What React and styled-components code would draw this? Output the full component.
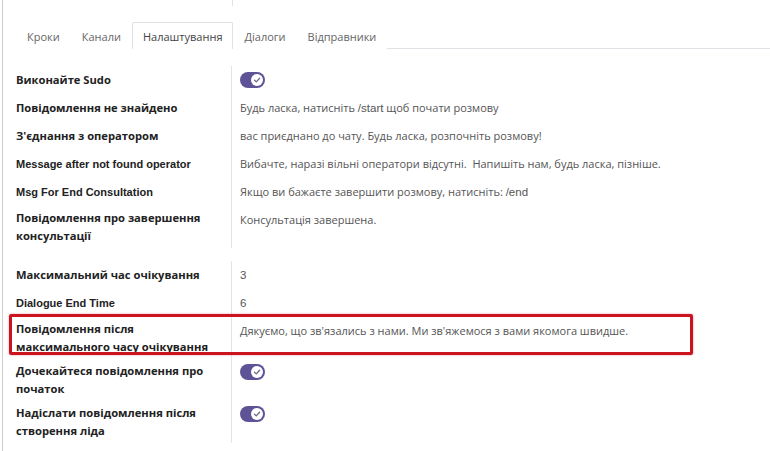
import React from 'react';
import styled, { createGlobalStyle } from 'styled-components';

const Global = createGlobalStyle`
    html, body {
        margin: 0;
        padding: 0;
        background: #fff;
    }
    body {
        font-family: "Open Sans", "Liberation Sans", sans-serif;
    }
`;

const Sheet = styled.div`
    border-left: 1px solid #cfcfcf;
    height: 451px;
    margin-left: 2px;
    overflow: hidden;
    box-sizing: border-box;
`;

const TopStub = styled.div`
    border-right: 1px solid #e2e2e2;
    height: 6px;
    width: 229px;
`;

const TabBar = styled.ul`
    border-bottom: 1px solid #dee2e6;
    display: flex;
    list-style: none;
    margin: 16px 0 0 13px;
    padding: 0;
`;

const Tab = styled.li`
    background: #fff;
    border: 1px solid ${p => (p.active ? '#dee2e6' : 'transparent')};
    border-bottom: none;
    color: ${p => (p.active ? '#444' : '#666')};
    font-size: 11px;
    height: 27px;
    line-height: 27px;
    margin-bottom: -1px;
    padding: 0 10px;
    box-sizing: border-box;
    border-radius: 2px 2px 0 0;
`;

const Group = styled.div`
    margin: ${p => p.top}px 0 0 13px;
    width: 740px;
`;

const Row = styled.div`
    display: grid;
    grid-template-columns: 216px 1fr;
    min-height: 28px;
    position: relative;
`;

const Label = styled.div`
    align-items: center;
    border-right: 1px solid #e4e4e4;
    box-sizing: border-box;
    color: #222;
    display: flex;
    font-family: ${p => (p.latin ? '"Liberation Sans", Arial, sans-serif' : '"Open Sans", sans-serif')};
    font-size: ${p => (p.latin ? '11px' : '11.2px')};
    font-weight: 700;
    line-height: 18px;
    padding: 3px 6px 3px 0;
`;

const Value = styled.div`
    align-items: ${p => (p.top ? 'flex-start' : 'center')};
    color: #555;
    display: flex;
    font-size: 11px;
    line-height: 18px;
    padding: ${p => (p.top ? '5px' : '3px')} 0 3px 8px;
`;

const Mono = styled.span`
    font-family: "Liberation Sans", Arial, sans-serif;
    font-size: 11.5px;
`;

const Highlight = styled(Row)`
    &::after {
        border: 3px solid #cc1420;
        border-radius: 2px;
        box-shadow: 0 0 2px rgba(204, 20, 32, 0.5);
        content: '';
        height: 35px;
        left: -7px;
        pointer-events: none;
        position: absolute;
        top: -3px;
        width: 678px;
    }
`;

const ToggleTrack = styled.span`
    align-items: center;
    background: #5d5396;
    border-radius: 8px;
    display: inline-flex;
    height: 16px;
    justify-content: flex-end;
    padding: 0 2px;
    width: 25px;
    box-sizing: border-box;
`;

const Knob = styled.span`
    align-items: center;
    background: #fff;
    border-radius: 50%;
    display: inline-flex;
    height: 12px;
    justify-content: center;
    width: 12px;
`;

function Toggle() {
    return (
        <ToggleTrack>
            <Knob>
                <svg width="8" height="8" viewBox="0 0 8 8">
                    <path d="M1.5 4.2 L3.3 5.9 L6.6 2.3" fill="none" stroke="#6f6a85" strokeWidth="1.3" strokeLinecap="round" strokeLinejoin="round" />
                </svg>
            </Knob>
        </ToggleTrack>
    );
}

const tabs = ['Кроки', 'Канали', 'Налаштування', 'Діалоги', 'Відправники'];

export default function App() {
    return (
        <Sheet>
            <Global />
            <TopStub />
            <TabBar>
                {tabs.map(t => (
                    <Tab key={t} active={t === 'Налаштування'}>{t}</Tab>
                ))}
            </TabBar>
            <Group top={17}>
                <Row>
                    <Label>Виконайте Sudo</Label>
                    <Value><Toggle /></Value>
                </Row>
                <Row>
                    <Label>Повідомлення не знайдено</Label>
                    <Value>Будь ласка, натисніть&nbsp;<Mono>/start</Mono>&nbsp;щоб почати розмову</Value>
                </Row>
                <Row>
                    <Label>З'єднання з оператором</Label>
                    <Value>вас приєднано до чату. Будь ласка, розпочніть розмову!</Value>
                </Row>
                <Row>
                    <Label latin>Message after not found operator</Label>
                    <Value>Вибачте, наразі вільні оператори відсутні.&nbsp; Напишіть нам, будь ласка, пізніше.</Value>
                </Row>
                <Row>
                    <Label latin>Msg For End Consultation</Label>
                    <Value>Якщо ви бажаєте завершити розмову, натисніть:&nbsp;<Mono>/end</Mono></Value>
                </Row>
                <Row>
                    <Label>Повідомлення про завершення консультації</Label>
                    <Value top>Консультація завершена.</Value>
                </Row>
            </Group>
            <Group top={13}>
                <Row>
                    <Label>Максимальний час очікування</Label>
                    <Value><Mono>3</Mono></Value>
                </Row>
                <Row>
                    <Label latin>Dialogue End Time</Label>
                    <Value><Mono>6</Mono></Value>
                </Row>
                <Highlight>
                    <Label>Повідомлення після максимального часу очікування</Label>
                    <Value top>Дякуємо, що зв'язались з нами. Ми зв'яжемося з вами якомога швидше.</Value>
                </Highlight>
                <Row>
                    <Label>Дочекайтеся повідомлення про початок</Label>
                    <Value top><Toggle /></Value>
                </Row>
                <Row>
                    <Label>Надіслати повідомлення після створення ліда</Label>
                    <Value top><Toggle /></Value>
                </Row>
            </Group>
        </Sheet>
    );
}
